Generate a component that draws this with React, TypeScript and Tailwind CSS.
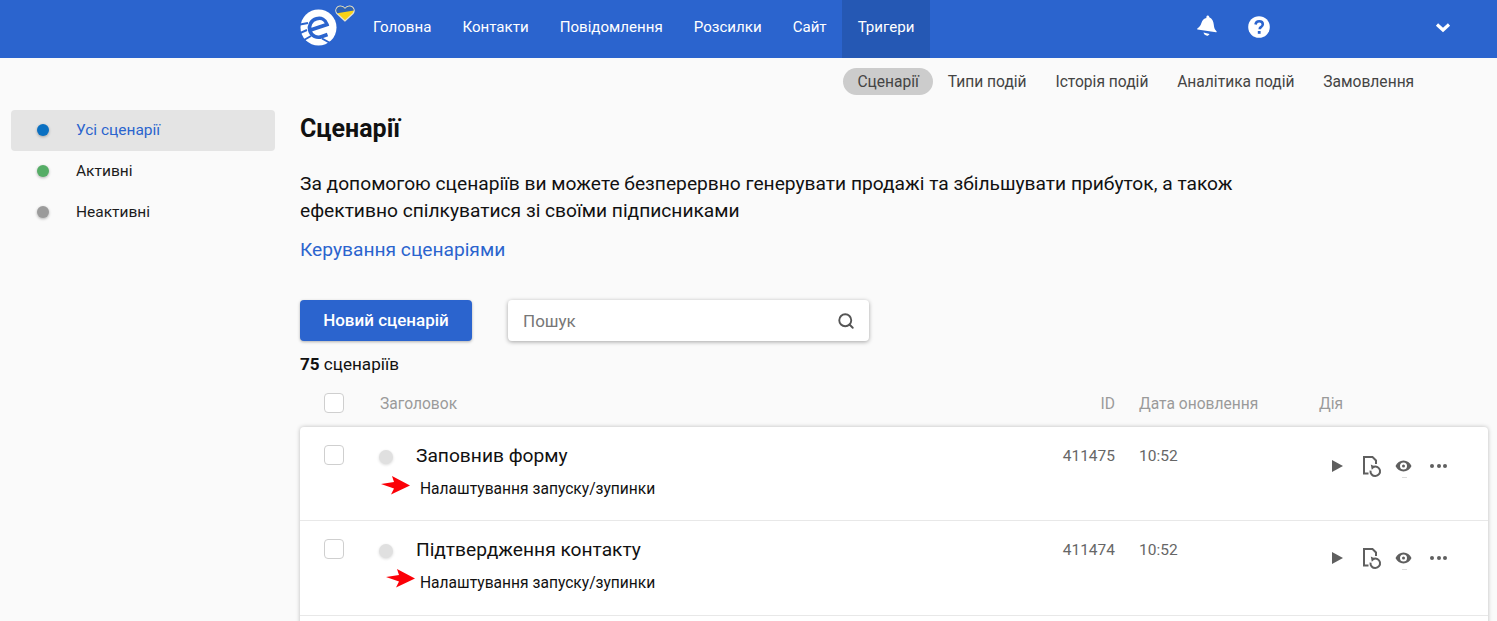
import { Search } from 'lucide-react'

const nav = ['Головна', 'Контакти', 'Повідомлення', 'Розсилки', 'Сайт', 'Тригери']
const subnav = ['Сценарії', 'Типи подій', 'Історія подій', 'Аналітика подій', 'Замовлення']

const filters = [
  { label: 'Усі сценарії', dot: 'bg-[#0a70c2]', active: true },
  { label: 'Активні', dot: 'bg-[#55ad66]', active: false },
  { label: 'Неактивні', dot: 'bg-[#9b9b9b]', active: false },
]

const rows = [
  { title: 'Заповнив форму', id: '411475', time: '10:52', arrow: 'left-[81px] top-[49px]', icons: 'pt-[11px]', height: 'h-[94px]' },
  { title: 'Підтвердження контакту', id: '411474', time: '10:52', arrow: 'left-[86px] top-[48px]', icons: 'pt-[9px]', height: 'h-[95px]' },
]

function Logo() {
  return (
    <div className="relative h-[58px] w-[57.500px] shrink-0">
      <svg className="absolute left-0 top-[9px]" width="37" height="37" viewBox="0 0 37 37" fill="none">
        <circle cx="18.500" cy="18.500" r="18" fill="#fff" />
        <path d="M9 21.500L27 15.500C25.500 10.500 21 8.500 16.500 9.800 11 11.300 8.500 16.500 9.800 21.500 11.300 27 17 29.500 22 27.500L27.500 25.500" stroke="#2b64ce" strokeWidth="3.600" />
        <path d="M0 15.500l8-1.500M0 24l7-3M4 31l7-4M22 29.500l9 5" stroke="#2b64ce" strokeWidth="2" />
      </svg>
      <svg className="absolute left-[35px] top-[5px]" width="20" height="17" viewBox="0 0 20 17">
        <path d="M10 16L2 8.500C-.5 5.500 1.500 1 5.500 1 7.500 1 9 2 10 3.500 11 2 12.500 1 14.500 1 18.500 1 20.500 5.500 18 8.500Z" fill="#f7d117" stroke="#e8e4d4" strokeWidth="1.200" />
        <path d="M2.200 8.200C-.1 5.500 1.700 1.600 5.500 1.600 7.500 1.600 9 2.600 10 4 11 2.600 12.500 1.600 14.500 1.600 17 1.600 18.700 3.400 18.800 5.500L2.200 8.200Z" fill="#2d62b5" />
      </svg>
    </div>
  )
}

function Header() {
  return (
    <header className="flex h-[58px] items-center bg-[#2b64ce] pl-[300px] text-white">
      <Logo />
      <nav className="flex h-full">
        {nav.map((item) => (
          <a
            key={item}
            className={`flex h-full items-center px-[15.500px] pb-[4px] text-[15.100px] ${item === 'Тригери' ? 'bg-[#2558b4]' : ''}`}
          >
            {item}
          </a>
        ))}
      </nav>
      <div className="mb-[4px] ml-[266px] flex items-center">
        <svg className="mb-[2px]" width="22" height="24" viewBox="0 0 22 24" fill="#fff">
          <path d="M11.500 1.500c1 0 1.800.7 1.800 1.700 3 1.300 4.200 4.300 4.500 7.500.2 2.600.7 4.500 2.700 6.500.4.400.1 1.100-.5 1L1.500 15.500c-.5-.2-.6-.9-.1-1.100 2.300-1.300 3.200-3 4-5.400 1-3 2.700-4.700 5-5.100-.2-1.300.3-2.400 1.100-2.400Z" />
          <path d="M7.500 18.600l6 1.300c-.6 1.300-1.800 2-3.200 1.700-1.400-.3-2.500-1.500-2.800-3Z" />
        </svg>
        <svg className="ml-[30px]" width="22" height="22" viewBox="0 0 22 22">
          <circle cx="11" cy="11" r="10.800" fill="#fff" />
          <path d="M7.500 8.500c.3-2 1.700-3.200 3.700-3.200 2.100 0 3.600 1.300 3.600 3 0 1.500-.9 2.200-1.900 2.900-.9.600-1.200 1-1.200 2" fill="none" stroke="#2b64ce" strokeWidth="2.600" />
          <rect x="9.800" y="15" width="2.800" height="2.800" fill="#2b64ce" />
        </svg>
        <svg className="ml-[165px]" width="16" height="11" viewBox="0 0 16 11" fill="none">
          <path d="M2 2.500l6 5.500 6-5.500" stroke="#fff" strokeWidth="3.200" />
        </svg>
      </div>
    </header>
  )
}

function Sidebar() {
  return (
    <aside className="w-[300px] shrink-0 pl-[11px] pr-[25px] pt-[52px]">
      {filters.map((f) => (
        <div
          key={f.label}
          className={`flex h-[41px] items-center rounded-[4px] pl-[26px] text-[15.500px] ${f.active ? 'bg-[#e4e4e4] text-[#2b64ce]' : 'text-[#1c1c1c]'}`}
        >
          <span className={`mb-[1px] h-[12px] w-[12px] rounded-full shadow-[0_1px_3px_rgba(0,0,0,0.3)] ${f.dot}`} />
          <span className="ml-[27px]">{f.label}</span>
        </div>
      ))}
    </aside>
  )
}

function Checkbox() {
  return <span className="block h-[20px] w-[20px] rounded-[4px] border border-[#cfcfcf] bg-white" />
}

function RowIcons() {
  return (
    <div className="flex items-center text-[#5f5f5f]">
      <svg className="mb-[3px]" width="11" height="12" viewBox="0 0 11 12" fill="#5f5f5f">
        <path d="M0 0l11 6-11 6Z" />
      </svg>
      <svg className="ml-[20px]" width="19" height="22" viewBox="0 0 19 22" fill="none" stroke="#5f5f5f">
        <path d="M5.500 17.500H1V1h8.500l3.500 3.500V8" strokeWidth="2" />
        <path d="M10.500 10.800a4.800 4.800 0 1 1-3 3.800" strokeWidth="2" />
        <path d="M7.800 8.500l4.500 2.300-3.500 2.900Z" fill="#5f5f5f" stroke="none" />
      </svg>
      <div className="relative mb-[3px] ml-[13px]">
        <svg className="block" width="17" height="12" viewBox="0 0 17 12">
          <path fillRule="evenodd" fill="#5f5f5f" d="M8.500 0.500C5 .5 2 2.700.5 6 2 9.300 5 11.500 8.500 11.500S15 9.300 16.500 6C15 2.700 12 .5 8.500.5ZM8.500 2.500a3.500 3.500 0 1 1 0 7 3.500 3.500 0 0 1 0-7Z" />
          <circle cx="8.500" cy="6" r="1.500" fill="#5f5f5f" />
        </svg>
        <span className="absolute left-[7px] top-[17px] h-px w-[5px] bg-[#dddddd]" />
      </div>
      <div className="mb-[3px] ml-[18px] flex gap-[2.500px]">
        <span className="h-[4px] w-[4px] rounded-full bg-[#5f5f5f]" />
        <span className="h-[4px] w-[4px] rounded-full bg-[#5f5f5f]" />
        <span className="h-[4px] w-[4px] rounded-full bg-[#5f5f5f]" />
      </div>
    </div>
  )
}

function Arrow({ className }: { className: string }) {
  return (
    <svg className={`absolute ${className}`} width="30" height="19" viewBox="0 0 30 19" fill="#fb0007">
      <path d="M0 8l13-2L11 0l18 9.500L10 18.500l3-6Z" />
    </svg>
  )
}

function Row({ row }: { row: (typeof rows)[number] }) {
  return (
    <div className={`relative flex border-b border-[#e8e8e8] pt-[18px] ${row.height}`}>
      <div className="w-[80px] pl-[24px]">
        <Checkbox />
      </div>
      <div className="w-[36px]">
        <span className="ml-[-1px] mt-[5px] block h-[14px] w-[14px] rounded-full bg-[#e0e0e0] shadow-[0_1px_3px_rgba(0,0,0,0.15)]" />
      </div>
      <div className="flex-1">
        <div className="text-[19.200px] leading-[22px] text-[#111]">{row.title}</div>
        <div className="ml-[4px] mt-[12px] text-[15.600px] leading-[20px] text-[#111]">Налаштування запуску/зупинки</div>
      </div>
      <div className="w-[80px] pr-[3px] pt-[2px] text-right text-[15.500px] leading-[18px] text-[#666]">{row.id}</div>
      <div className="w-[214px] pl-[21px] pt-[2px] text-[15.500px] leading-[18px] text-[#666]">{row.time}</div>
      <div className={`w-[156px] ${row.icons}`}>
        <RowIcons />
      </div>
      <Arrow className={row.arrow} />
    </div>
  )
}

export default function App() {
  return (
    <div className="h-screen overflow-hidden bg-[#fafafa] font-['Roboto',sans-serif]">
      <Header />
      <div className="flex">
        <Sidebar />
        <main className="w-[1188px]">
          <div className="flex h-[57px] items-start pl-[543px] pt-[10px] text-[15.600px] text-[#444]">
            {subnav.map((item, i) => (
              <a
                key={item}
                className={`flex h-[27px] items-center rounded-full px-[14.400px] pt-[2px] ${i === 0 ? 'bg-[#cccccc]' : ''}`}
              >
                {item}
              </a>
            ))}
          </div>
          <h1 className="text-[25px] font-bold leading-[28px] text-[#111]">Сценарії</h1>
          <p className="mt-[27px] w-[950px] text-[19.200px] leading-[27px] text-[#111]">
            За допомогою сценаріїв ви можете безперервно генерувати продажі та збільшувати прибуток, а також ефективно
            спілкуватися зі своїми підписниками
          </p>
          <a className="mt-[12px] block text-[19.200px] leading-[27px] text-[#2b64ce]">Керування сценаріями</a>
          <div className="mt-[37px] flex items-center">
            <button className="h-[41px] w-[172px] rounded-[4px] bg-[#2b64ce] text-[17px] font-medium text-white shadow-[0_1px_3px_rgba(0,0,0,0.3)]">
              Новий сценарій
            </button>
            <div className="ml-[36px] flex h-[41px] w-[361px] items-center justify-between rounded-[4px] bg-white pl-[15px] pr-[14px] text-[17px] text-[#777] shadow-[0_1px_4px_rgba(0,0,0,0.35)]">
              <span className="pt-[2px]">Пошук</span>
              <Search size={18} strokeWidth={2.500} className="text-[#555]" />
            </div>
          </div>
          <div className="mt-[13px] text-[17.100px] leading-[20px] text-[#111]">
            <b className="font-bold">75</b> сценаріїв
          </div>
          <div className="mt-[5px] flex h-[48px] items-center text-[15.600px] text-[#9a9a9a]">
            <div className="w-[80px] pl-[24px]">
              <Checkbox />
            </div>
            <div className="flex-1 pt-[3px]">Заголовок</div>
            <div className="w-[80px] pr-[3px] pt-[3px] text-right">ID</div>
            <div className="w-[201px] pl-[21px] pt-[3px]">Дата оновлення</div>
            <div className="w-[169px] pt-[3px]">Дія</div>
          </div>
          <div className="rounded-[4px] bg-white shadow-[0_0_4px_rgba(0,0,0,0.25)]">
            {rows.map((row) => (
              <Row key={row.id} row={row} />
            ))}
            <div className="h-[60px]" />
          </div>
        </main>
      </div>
    </div>
  )
}
